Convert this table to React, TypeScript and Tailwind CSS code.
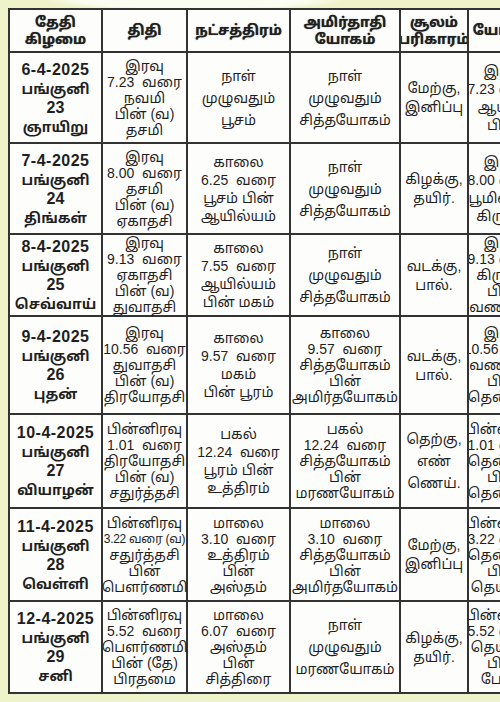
type Row = {
  h: string;
  date: string[];
  cells: string[][];
};

const ROWS: Row[] = [
  {
    h: "h-[91px]",
    date: ["6-4-2025", "பங்குனி", "23", "ஞாயிறு"],
    cells: [
      ["இரவு", "7.23  வரை", "நவமி", "பின் (வ)", "தசமி"],
      ["நாள்", "முழுவதும்", "பூசம்"],
      ["நாள்", "முழுவதும்", "சித்தயோகம்"],
      ["மேற்கு,", "இனிப்பு"],
      ["இரவு", "7.23 வரை", "ஆயுஷ்", "பின்"],
    ],
  },
  {
    h: "h-[91px]",
    date: ["7-4-2025", "பங்குனி", "24", "திங்கள்"],
    cells: [
      ["இரவு", "8.00  வரை", "தசமி", "பின் (வ)", "ஏகாதசி"],
      ["காலை", "6.25  வரை", "பூசம் பின்", "ஆயில்யம்"],
      ["நாள்", "முழுவதும்", "சித்தயோகம்"],
      ["கிழக்கு,", "தயிர்."],
      ["இரவு", "8.00 வரை", "பூமிஷ்டம்", "கிருதம்"],
    ],
  },
  {
    h: "h-[81px]",
    date: ["8-4-2025", "பங்குனி", "25", "செவ்வாய்"],
    cells: [
      ["இரவு", "9.13  வரை", "ஏகாதசி", "பின் (வ)", "துவாதசி"],
      ["காலை", "7.55  வரை", "ஆயில்யம்", "பின் மகம்"],
      ["நாள்", "முழுவதும்", "சித்தயோகம்"],
      ["வடக்கு,", "பால்."],
      ["இரவு", "9.13 வரை", "கிருதம்", "பின்", "வணிஜம்"],
    ],
  },
  {
    h: "h-[98px]",
    date: ["9-4-2025", "பங்குனி", "26", "புதன்"],
    cells: [
      ["இரவு", "10.56  வரை", "துவாதசி", "பின் (வ)", "திரயோதசி"],
      ["காலை", "9.57  வரை", "மகம்", "பின் பூரம்"],
      ["காலை", "9.57  வரை", "சித்தயோகம்", "பின்", "அமிர்தயோகம்"],
      ["வடக்கு,", "பால்."],
      ["இரவு", "10.56 வரை", "வணிஜம்", "பின்", "தென்னம்"],
    ],
  },
  {
    h: "h-[94px]",
    date: ["10-4-2025", "பங்குனி", "27", "வியாழன்"],
    cells: [
      ["பின்னிரவு", "1.01  வரை", "திரயோதசி", "பின் (வ)", "சதுர்த்தசி"],
      ["பகல்", "12.24  வரை", "பூரம் பின்", "உத்திரம்"],
      ["பகல்", "12.24  வரை", "சித்தயோகம்", "பின்", "மரணயோகம்"],
      ["தெற்கு,", "எண்", "ணெய்."],
      ["பின்னிரவு", "1.01 வரை", "தென்னம்", "பின்", "தென்னம்"],
    ],
  },
  {
    h: "h-[93px]",
    date: ["11-4-2025", "பங்குனி", "28", "வெள்ளி"],
    cells: [
      ["பின்னிரவு", "3.22 வரை (வ)", "சதுர்த்தசி", "பின்", "பௌர்ணமி"],
      ["மாலை", "3.10  வரை", "உத்திரம்", "பின்", "அஸ்தம்"],
      ["மாலை", "3.10  வரை", "சித்தயோகம்", "பின்", "அமிர்தயோகம்"],
      ["மேற்கு,", "இனிப்பு"],
      ["பின்னிரவு", "3.22 வரை", "தென்னம்", "பின்", "தெய்வம்"],
    ],
  },
  {
    h: "h-[92px]",
    date: ["12-4-2025", "பங்குனி", "29", "சனி"],
    cells: [
      ["பின்னிரவு", "5.52  வரை", "பௌர்ணமி", "பின் (தே)", "பிரதமை"],
      ["மாலை", "6.07  வரை", "அஸ்தம்", "பின்", "சித்திரை"],
      ["நாள்", "முழுவதும்", "மரணயோகம்"],
      ["கிழக்கு,", "தயிர்."],
      ["பின்னிரவு", "5.52 வரை", "தெய்வம்", "பின்", "பேதம்"],
    ],
  },
];

const HEADERS = [
  ["தேதி", "கிழமை"],
  ["திதி"],
  ["நட்சத்திரம்"],
  ["அமிர்தாதி", "யோகம்"],
  ["சூலம்", "பரிகாரம்"],
  ["யோகம்"],
];

const GAP: Record<number, string> = {
  1: "justify-center",
  2: "justify-center gap-[3px]",
  3: "justify-center gap-[6px]",
  4: "justify-center gap-[2px]",
  5: "justify-evenly",
};

function Lines({ lines }: { lines: string[] }) {
  return (
    <div className={`flex h-full flex-col items-center ${GAP[lines.length]}`}>
      {lines.map((l, i) => (
        <span
          key={i}
          className={
            l.length > 11
              ? "whitespace-pre text-[12px] leading-[16px] tracking-[-0.3px]"
              : "whitespace-pre text-[14px] leading-[16px]"
          }
        >
          {l}
        </span>
      ))}
    </div>
  );
}

export default function App() {
  return (
    <div className="h-[702px] w-[500px] overflow-hidden bg-[#eef3c9] bg-[radial-gradient(ellipse_150px_11px_at_195px_0px,#fbfdf2_75%,#eef3c9_100%)] pl-[8px] pt-[8px] font-['Liberation_Sans','Noto_Sans_Tamil','Lohit_Tamil',sans-serif] text-[#1f1f1f]">
      <table className="w-[529px] table-fixed border-collapse bg-[#fdfdfb]">
        <colgroup>
          <col className="w-[93px]" />
          <col className="w-[85px]" />
          <col className="w-[103px]" />
          <col className="w-[110px]" />
          <col className="w-[68px]" />
          <col className="w-[70px]" />
        </colgroup>
        <thead>
          <tr className="h-[43px]">
            {HEADERS.map((h, i) => (
              <th
                key={i}
                className="overflow-hidden border-2 border-[#333] p-0 align-middle font-bold"
              >
                <div className="flex flex-col items-center justify-center">
                  {h.map((t, j) => (
                    <span key={j} className="whitespace-nowrap text-[14px] leading-[17px] [text-shadow:0_0_1px_#555]">
                      {t}
                    </span>
                  ))}
                </div>
              </th>
            ))}
          </tr>
        </thead>
        <tbody>
          {ROWS.map((r, i) => (
            <tr key={i} className={r.h}>
              <td className="border-2 border-[#333] p-0">
                <div className="flex h-full flex-col items-center justify-center gap-[2px] font-bold">
                  <span className="text-[16px] leading-[18px] tracking-[0.5px]">{r.date[0]}</span>
                  <span className="text-[14px] leading-[16px]">{r.date[1]}</span>
                  <span className="text-[16px] leading-[18px]">{r.date[2]}</span>
                  <span className="text-[14px] leading-[16px]">{r.date[3]}</span>
                </div>
              </td>
              {r.cells.map((c, j) => (
                <td
                  key={j}
                  className={
                    j === 4
                      ? "overflow-hidden border-2 border-[#333] p-0"
                      : "border-2 border-[#333] p-0"
                  }
                >
                  <Lines lines={c} />
                </td>
              ))}
            </tr>
          ))}
        </tbody>
      </table>
    </div>
  );
}
